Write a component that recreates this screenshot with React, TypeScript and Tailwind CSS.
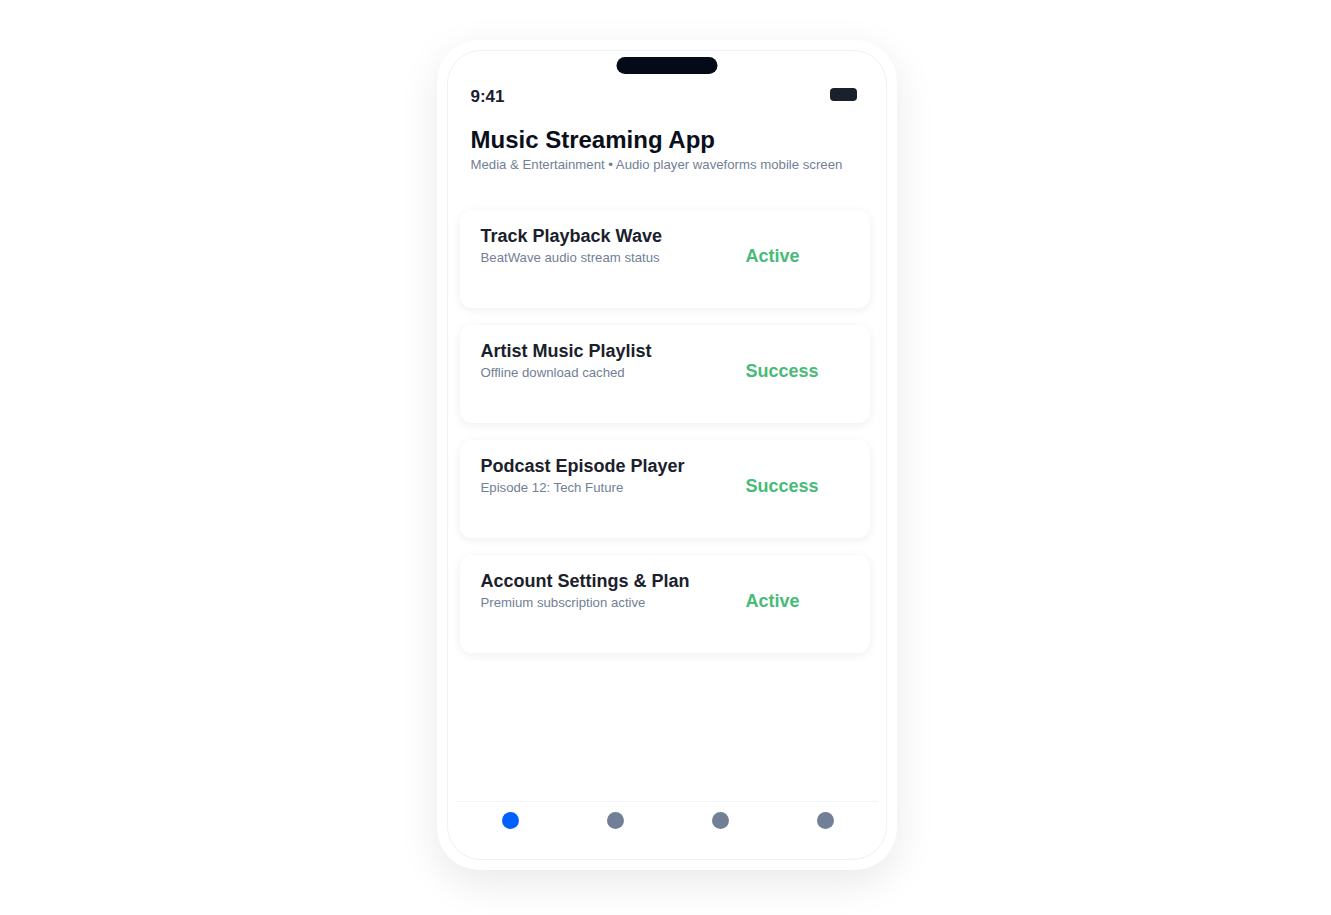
import React from 'react';

type Item = {
    title: string;
    subtitle: string;
    status: string;
};

const items: Item[] = [
    { title: 'Track Playback Wave', subtitle: 'BeatWave audio stream status', status: 'Active' },
    { title: 'Artist Music Playlist', subtitle: 'Offline download cached', status: 'Success' },
    { title: 'Podcast Episode Player', subtitle: 'Episode 12: Tech Future', status: 'Success' },
    { title: 'Account Settings & Plan', subtitle: 'Premium subscription active', status: 'Active' },
];

const StatusCard: React.FC<{ item: Item }> = ({ item }) => (
    <div className="w-[410px] h-[98px] rounded-xl bg-white shadow-[0_2px_10px_rgba(15,23,42,0.07)] flex items-start pl-[21px] pr-5 pt-[15px]">
        <div className="flex-1 min-w-0">
            <div className="text-[18px] leading-[22px] font-bold text-[#1a202c]">{item.title}</div>
            <div className="mt-[2px] text-[13.2px] leading-[18px] text-[#718096]">{item.subtitle}</div>
        </div>
        <div className="w-[104px] mt-[19px] text-[18px] leading-[24px] font-bold text-[#48bb78]">{item.status}</div>
    </div>
);

export default function App() {
    const navDots = ['bg-[#0061ff]', 'bg-[#718096]', 'bg-[#718096]', 'bg-[#718096]'];

    return (
        <div className="min-h-screen bg-white flex justify-center pt-[40px] pl-[2px]" style={{ fontFamily: '"Liberation Sans", Arial, sans-serif' }}>
            <div className="w-[460px] h-[830px] rounded-[42px] bg-white p-[10px] shadow-[0_12px_40px_rgba(0,0,0,0.09)]">
                <div className="relative h-full rounded-[34px] border border-[#eef2f8] flex flex-col">
                    {/* notch */}
                    <div className="absolute top-[6px] left-1/2 -translate-x-1/2 w-[101px] h-[17px] rounded-full bg-[#050a18]" />

                    {/* status bar */}
                    <div className="flex items-center justify-between pl-[23px] pr-[29px] pt-[35px] h-[57px]">
                        <span className="text-[17px] leading-[22px] font-bold text-[#1a202c]">9:41</span>
                        <span className="block w-[27px] h-[13px] rounded-[4px] bg-[#1a202c] -mt-[6px]" />
                    </div>

                    {/* header */}
                    <div className="pl-[23px] pt-[16px]">
                        <h1 className="text-[24px] leading-[32px] font-bold text-[#0a0f1c]">Music Streaming App</h1>
                        <p className="text-[13.2px] leading-[18px] text-[#718096]">
                            Media &amp; Entertainment • Audio player waveforms mobile screen
                        </p>
                    </div>

                    {/* cards */}
                    <div className="flex flex-col gap-[17px] pl-3 pt-[36px]">
                        {items.map(item => (
                            <StatusCard key={item.title} item={item} />
                        ))}
                    </div>

                    <div className="flex-1" />

                    {/* bottom nav */}
                    <div className="mx-[8px] border-t border-[#f1f4f9] pb-[30px]">
                        <div className="grid grid-cols-4 w-[420px] ml-[2px] pt-[10px]">
                            {navDots.map((cls, i) => (
                                <div key={i} className="flex justify-center">
                                    <span className={`block w-[17px] h-[17px] rounded-full ${cls}`} />
                                </div>
                            ))}
                        </div>
                    </div>
                </div>
            </div>
        </div>
    );
}
